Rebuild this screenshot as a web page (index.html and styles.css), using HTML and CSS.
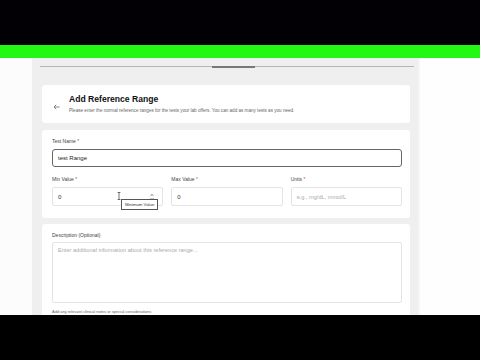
FILE: index.html
```html
<!DOCTYPE html>
<html>
<head>
<meta charset="utf-8">
<link rel="stylesheet" href="styles.css">
</head>
<body>
<div class="letterbox top"></div>
<div class="greenbar"></div>
<div class="viewport">
  <div class="gutter"></div>
  <div class="panel">
    <div class="tabs"><div class="tab-active"></div></div>
    <section class="card header-card">
      <div class="back">
        <svg width="7" height="6" viewBox="0 0 7 6"><path d="M6.5 3H1M3.2 0.8L1 3l2.2 2.2" fill="none" stroke="#777" stroke-width="0.9"/></svg>
      </div>
      <div class="head-text">
        <h1 class="title">Add Reference Range</h1>
        <p class="subtitle">Please enter the normal reference ranges for the tests your lab offers. You can add as many tests as you need.</p>
      </div>
    </section>
    <section class="card form-card">
      <label class="label">Test Name <span class="req">*</span></label>
      <div class="input focused">test Range</div>
      <div class="row">
        <div class="field">
          <label class="label">Min Value <span class="req">*</span></label>
          <div class="input number">0
            <span class="spin">
              <svg width="4" height="8" viewBox="0 0 4 8"><path d="M0.5 3L2 1.2 3.5 3M0.5 5L2 6.8 3.5 5" fill="none" stroke="#666" stroke-width="0.7"/></svg>
            </span>
            <span class="cursor">
              <svg width="4" height="8" viewBox="0 0 4 8"><path d="M0.6 0.5h2.8M2 0.5v7M0.6 7.5h2.8" fill="none" stroke="#333" stroke-width="0.7"/></svg>
            </span>
            <span class="tooltip">Minimum Value</span>
          </div>
        </div>
        <div class="field">
          <label class="label">Max Value <span class="req">*</span></label>
          <div class="input">0</div>
        </div>
        <div class="field">
          <label class="label">Units <span class="req">*</span></label>
          <div class="input placeholder">e.g., mg/dL, mmol/L</div>
        </div>
      </div>
    </section>
    <section class="card desc-card">
      <label class="label">Description (Optional)</label>
      <div class="textarea">Enter additional information about this reference range...</div>
      <p class="helper">Add any relevant clinical notes or special considerations</p>
    </section>
  </div>
  <div class="side"></div>
</div>
<div class="letterbox bottom"></div>
</body>
</html>
```
FILE: styles.css
```css
html, body {
  margin: 0;
  padding: 0;
  background: #000;
  width: 480px;
  height: 360px;
  overflow: hidden;
  font-family: "Liberation Sans", Arial, sans-serif;
}
.letterbox.top { height: 45px; background: #030005; }
.letterbox.bottom { height: 45px; background: #000; }
.greenbar { height: 13px; background: #22f812; }
.viewport {
  height: 257px;
  display: flex;
  background: #fdfdfd;
  overflow: hidden;
}
.gutter { width: 32px; flex: none; background: #fcfcfc; }
.side { flex: 1; background: #fefefe; }
.panel {
  width: 386px;
  flex: none;
  background: #efefef;
  padding-top: 8px;
  box-sizing: content-box;
  border-right: 2px solid #f5f5f5;
}
.tabs {
  margin: 0 4px 0 8px;
  height: 0;
  border-top: 1px solid #b5b5b5;
  position: relative;
}
.tab-active {
  position: absolute;
  left: 172px;
  top: -1px;
  width: 43px;
  height: 2px;
  background: #777;
}
.card {
  background: #fff;
  margin: 0 8px 0 10px;
  border-radius: 3px;
  box-sizing: border-box;
}
.header-card {
  margin-top: 18px;
  height: 38px;
  display: flex;
  padding: 9px 0 0 11px;
}
.back { width: 16px; padding-top: 2px; }
.head-text { display: flex; flex-direction: column; }
.title {
  margin: 0;
  font-size: 8.6px;
  font-weight: bold;
  color: #111;
  line-height: 11px;
}
.subtitle {
  margin: 3px 0 0;
  font-size: 4.6px;
  color: #666;
  line-height: 6px;
}
.form-card {
  margin-top: 7px;
  height: 88px;
  padding: 8px 8px 0 10px;
}
.label {
  display: block;
  font-size: 5px;
  line-height: 6px;
  color: #444;
}
.req { color: #c44; }
.input {
  margin-top: 5px;
  height: 19px;
  box-sizing: border-box;
  border: 1px solid #e4e4e4;
  border-radius: 2px;
  font-size: 6px;
  color: #333;
  display: flex;
  align-items: center;
  padding-left: 5px;
  position: relative;
}
.input.focused {
  height: 18px;
  border: 1.4px solid #666;
  border-radius: 3px;
  color: #222;
}
.input.placeholder { color: #aaa; font-size: 5.6px; }
.row {
  margin-top: 9px;
  display: grid;
  grid-template-columns: 1fr 1fr 1fr;
  gap: 8px;
}
.spin {
  position: absolute;
  right: 8px;
  top: 5px;
  display: flex;
}
.cursor {
  position: absolute;
  left: 64px;
  top: 4px;
  display: flex;
}
.tooltip {
  position: absolute;
  left: 68px;
  top: 11px;
  background: #fff;
  border: 1px solid #555;
  font-size: 4.3px;
  color: #333;
  padding: 2px 3px;
  line-height: 5px;
  white-space: nowrap;
  z-index: 2;
}
.desc-card {
  margin-top: 6px;
  height: 120px;
  padding: 8px 8px 0 10px;
}
.textarea {
  margin-top: 4px;
  height: 61px;
  box-sizing: border-box;
  border: 1px solid #e4e4e4;
  border-radius: 2px;
  padding: 4px 5px;
  font-size: 5.6px;
  color: #aaa;
}
.helper {
  margin: 6px 0 0;
  font-size: 4px;
  color: #666;
}
```
